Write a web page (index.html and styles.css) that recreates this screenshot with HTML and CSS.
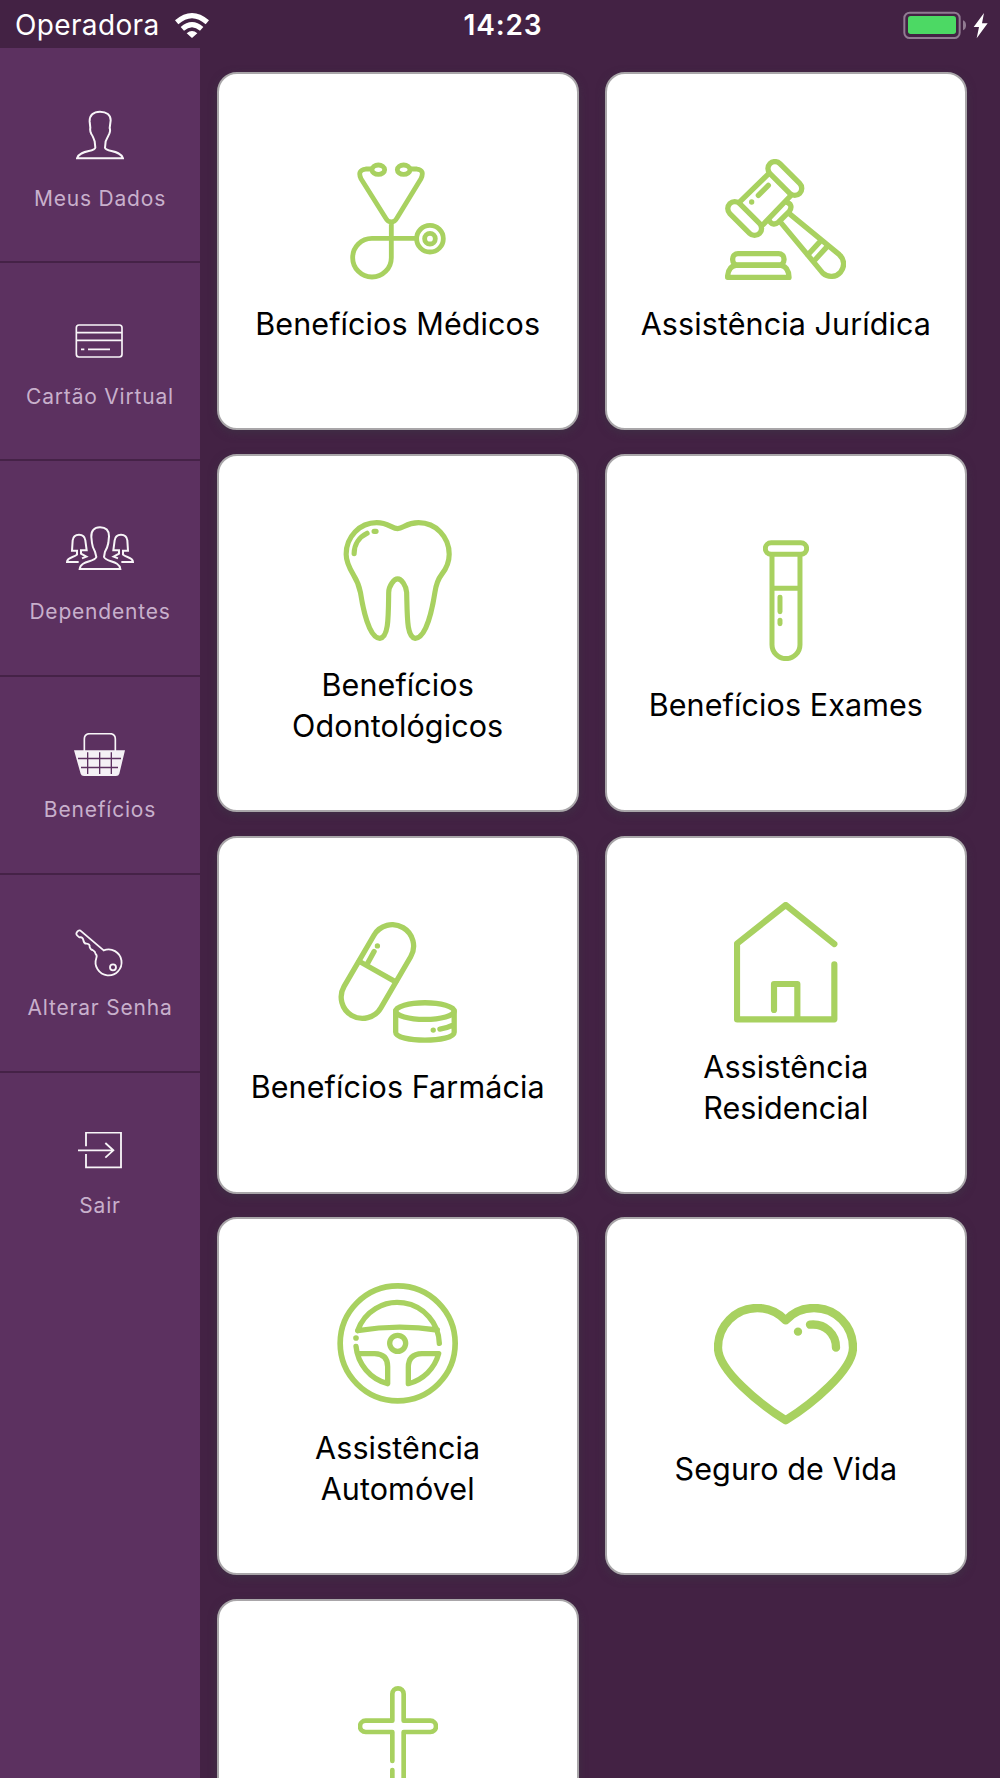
FILE: index.html
```html
<!DOCTYPE html>
<html lang="pt-BR">
<head>
<meta charset="utf-8">
<title>Benefícios</title>
<link rel="stylesheet" href="styles.css">
</head>
<body>
<header class="status">
  <div class="status-left">
    <span class="carrier">Operadora</span>
    <svg class="wifi" width="34" height="25" viewBox="0 0 102 75"><path fill="#fff" d="M0 22Q51-22 102 22L92 34Q51-2 10 34ZM17 42Q51 12 85 42L75 53Q51 32 27 53ZM35 61Q51 47 67 61L51 75Z"/></svg>
  </div>
  <span class="time">14:23</span>
  <svg class="battery" width="86" height="28" viewBox="0 0 258 84"><rect x="4" y="5" width="166" height="76" rx="16" fill="none" stroke="#917b92" stroke-width="6"/><rect x="15" y="15" width="144" height="54" rx="8" fill="#4cd964"/><path fill="#917b92" d="M180 28Q189 31 189 43Q189 55 180 58Z"/><path fill="#fff" d="M243 6L212 48H228L221 82L254 37H237Z"/></svg>
</header>
<div class="app">
  <nav class="sidebar">
    <a class="item item-tall">
      <span class="slot"><svg class="line" width="48" height="51" viewBox="228 328 144 153" stroke-width="6"><path d="M300 336C280 336 268 347 269 366L271 385Q269 392 274 403Q278 408 284 425L286 444C284 458 240 450 231 476H369C360 450 318 458 315 444L317 425Q325 408 328 402Q332 392 329 385L332 362C332 346 320 336 300 336Z"/></svg></span>
      <span class="item-label">Meus Dados</span>
    </a>
    <a class="item">
      <span class="slot"><svg class="line" width="50" height="34" viewBox="226 161 150 102" stroke-width="5"><rect x="230" y="164" width="137" height="96" rx="8"/><path d="M230 187H367M230 210H367M244 237H254M265 237H331"/></svg></span>
      <span class="item-label">Cartão Virtual</span>
    </a>
    <a class="item item-tall">
      <span class="slot"><svg class="line" width="68" height="46" viewBox="198 766 204 138" stroke-width="6"><path d="M300 773C282 773 273 784 274 802L276 820Q277 832 285 846L289 862C284 878 242 872 239 898H361C358 872 318 878 312 862L315 846Q323 832 325 820L327 800C327 784 318 773 300 773Z"/><path d="M236 877H201C202 862 222 864 231 855V843H216L218 812Q220 795 237 795Q254 795 256 812L260 842H243V852L259 861L246 866"/><path d="M364 877H399C398 862 378 864 369 855V843H384L382 812Q380 795 363 795Q346 795 344 812L340 842H357V852L341 861L354 866"/></svg></span>
      <span class="item-label">Dependentes</span>
    </a>
    <a class="item">
      <span class="slot"><svg class="line" width="53" height="44" viewBox="222 158 159 132" stroke-width="5"><path d="M253 212V176Q253 160 270 160H329Q346 160 346 176V212"/><path fill="#f4f1f5" stroke="none" d="M222 210H375L358 280Q356 287 348 287H252Q244 287 242 280Z"/><path class="cut" stroke-width="4" d="M234 234.500H363M243 261.500H354M263 216V281M299 216V281M334 216V281"/></svg></span>
      <span class="item-label">Benefícios</span>
    </a>
    <a class="item">
      <span class="slot"><svg class="line" width="50" height="48" viewBox="227 743 150 144" stroke-width="5.500"><path d="M313 807L246 750Q240 744 234 751Q228 758 234 763L240 768Q250 766 252 776Q254 788 262 787Q272 788 271 797Q274 806 280 806Q288 810 289 818Q294 822 291 830A39 39 0 1 0 313 807Z"/><circle cx="341" cy="858" r="9"/></svg></span>
      <span class="item-label">Alterar Senha</span>
    </a>
    <a class="item">
      <span class="slot"><svg class="line" width="44" height="37" viewBox="234 1355 132 111" stroke-width="5.500"><path d="M258 1398V1357H363V1461H258V1421M234 1410H340M316 1388L340 1410L316 1432"/></svg></span>
      <span class="item-label">Sair</span>
    </a>
  </nav>
  <main class="grid">
    <article class="card">
      <svg class="art" width="97.300" height="120.700" viewBox="388 87 292 362" stroke-width="14.500"><path d="M456 117H438Q412 120 424 146L498 264Q504 276 515 276Q526 276 532 264L604 146Q616 120 592 117H574M515 276V383A58 58 0 1 1 457 325H590"/><ellipse cx="476" cy="119" rx="19" ry="14"/><ellipse cx="552" cy="119" rx="19" ry="14"/><circle cx="631" cy="326" r="40"/><circle cx="631" cy="326" r="16"/></svg>
      <h2>Benefícios Médicos</h2>
    </article>
    <article class="card">
      <svg class="art" width="121" height="121" viewBox="375 86 363 363" stroke-width="16"><rect x="-63" y="-21" width="126" height="42" rx="21" transform="translate(554.500 144.500) rotate(45)"/><rect x="-63" y="-21" width="126" height="42" rx="21" transform="translate(434 264.500) rotate(45)"/><path d="M507 129L420 214M574 194L490 282M475 195L505 165M556 214Q582 222 568 243L536 275Q518 290 506 268M568 250L718 373A37 37 0 0 1 669 429L542 276M660 334L623 374M682 348L642 392M383 441V436Q386 407 408 405H544Q566 410 567 441Z"/><rect x="398" y="370" width="154" height="34" rx="16"/><circle class="dot" cx="455" cy="215" r="8"/></svg>
      <h2>Assistência Jurídica</h2>
    </article>
    <article class="card">
      <svg class="art" width="108.700" height="121" viewBox="371 87 326 364" stroke-width="15.500"><path d="M535 113C552 113 560 95 598 95C650 95 690 138 690 190C690 214 682 232 668 250C654 268 650 284 647 305C640 350 622 442 588 443C562 440 564 380 562 305C561 285 546 264 535 264C524 264 508 285 508 305C507 380 508 440 481 443C448 442 430 350 423 305C419 284 412 268 402 252C390 232 380 214 380 190C380 138 420 95 472 95C506 95 518 113 535 113ZM404 188C404 160 420 138 443 127M464 121H470"/></svg>
      <h2>Benefícios<br>Odontológicos</h2>
    </article>
    <article class="card">
      <svg class="art" width="46.300" height="121" viewBox="487 120 139 363" stroke-width="15"><rect x="494" y="128" width="124" height="35" rx="17.500"/><path d="M514 165V434A42 42 0 0 0 598 434V165M514 265H598M538 292V335M538 361V371"/></svg>
      <h2>Benefícios Exames</h2>
    </article>
    <article class="card">
      <svg class="art" width="118.700" height="121" viewBox="355 125 356 364" stroke-width="16"><rect x="-64" y="-153" width="128" height="306" rx="64" transform="translate(473 274) rotate(30.300)"/><path d="M418 243L528 305M442 252L463 214M528 393V457C528 488 704 488 704 457V393M700 435Q682 444 661 447"/><ellipse cx="616" cy="393" rx="88" ry="25"/><circle class="dot" cx="473" cy="197" r="8"/><circle class="dot" cx="641" cy="450" r="8"/></svg>
      <h2>Benefícios Farmácia</h2>
    </article>
    <article class="card">
      <svg class="art" width="103.700" height="121" viewBox="401 63 311 363" stroke-width="18.500"><path d="M702 189L556 72L410 188V415H702V250M521 387V309H591V410"/></svg>
      <h2>Assistência<br>Residencial</h2>
    </article>
    <article class="card">
      <svg class="art" width="121" height="121" viewBox="351 69 363 363" stroke-width="16"><circle cx="533" cy="250" r="172.500" stroke-width="17"/><circle cx="533" cy="250" r="24"/><path d="M413 212A126 126 0 0 1 658 250M413 212Q533 192 652 210M408 259A128 128 0 0 0 503 371V320Q503 282 464 281H415M656 281H606Q565 282 565 322V371A126 126 0 0 0 656 281Z"/><circle class="dot" cx="408" cy="234" r="8.500"/></svg>
      <h2>Assistência<br>Automóvel</h2>
    </article>
    <article class="card">
      <svg class="art" width="143" height="121" viewBox="342 131 429 363" stroke-width="25"><path d="M557 180C535 157 505 143 472 143C406 143 354 196 354 262C354 330 480 432 557 480C634 432 759 330 759 262C759 196 708 143 642 143C608 143 578 157 557 180ZM630 193C676 188 708 222 708 262"/><circle class="dot" cx="594" cy="214" r="12.500"/></svg>
      <h2>Seguro de Vida</h2>
    </article>
    <article class="card">
      <svg class="art" width="80" height="121" viewBox="415 1275 240 363" stroke-width="14"><path d="M518 1500V1413H438A17 17 0 0 1 438 1379H518V1299A17 17 0 0 1 552 1299V1379H632A17 17 0 0 1 632 1413H552V1614A17 17 0 0 1 518 1614V1527"/></svg>
      <h2></h2>
    </article>
  </main>
</div>
</body>
</html>
```
FILE: styles.css
```css
* { box-sizing: border-box; }

body {
  margin: 0;
  width: 1000px;
  height: 1778px;
  overflow: hidden;
  display: flex;
  flex-direction: column;
  background: #432244;
  font-family: Inter, "Liberation Sans", sans-serif;
}

.status {
  flex: none;
  height: 48px;
  display: grid;
  grid-template-columns: 1fr auto 1fr;
  align-items: center;
  padding: 0 11px 0 15px;
  color: #fff;
  font-size: 28px;
  line-height: 50px;
}

.status-left { display: flex; align-items: center; gap: 15px; }
.carrier { letter-spacing: 0.35px; }
.time { padding-left: 2px; font-weight: 600; letter-spacing: 0.9px; }
.battery { justify-self: end; }

.app { flex: 1; min-height: 0; display: flex; overflow: hidden; }

.sidebar {
  flex: none;
  width: 200px;
  background: #5c3160;
}

.item {
  height: 198px;
  padding-top: 48px;
  display: flex;
  flex-direction: column;
  align-items: center;
  gap: 12.500px;
  border-bottom: 2px solid #452247;
}
.item-tall { height: 215.300px; }
.item:last-child { border-bottom: 0; }

.slot {
  height: 60px;
  display: flex;
  align-items: center;
}
.item-tall .slot { height: 77px; }

.item-label {
  font-size: 21px;
  line-height: 26px;
  letter-spacing: 0.8px;
  color: #c8b0cc;
  white-space: nowrap;
}

.line { fill: none; stroke: #f8f5f8; }
.cut { stroke: #5c3160; }

.grid {
  padding: 24.300px 0 0 16.700px;
  display: grid;
  grid-template-columns: 362px 362px;
  grid-auto-rows: 358px;
  gap: 23.700px 26.200px;
}

.card {
  display: flex;
  flex-direction: column;
  align-items: center;
  justify-content: center;
  gap: 23px;
  background: #fff;
  border: 2px solid #a9a6a9;
  border-radius: 20px;
  box-shadow: 0 3px 9px rgba(60, 60, 70, 0.5);
}

.card h2 {
  margin: 0;
  min-height: 41px;
  font-size: 30.500px;
  font-weight: 400;
  line-height: 41px;
  text-align: center;
  letter-spacing: 0.1px;
  color: #000;
  white-space: nowrap;
}

.art {
  flex: none;
  fill: none;
  stroke: #a8d160;
  stroke-linecap: round;
  stroke-linejoin: round;
}
.art .dot { fill: #a8d160; stroke: none; }
```
